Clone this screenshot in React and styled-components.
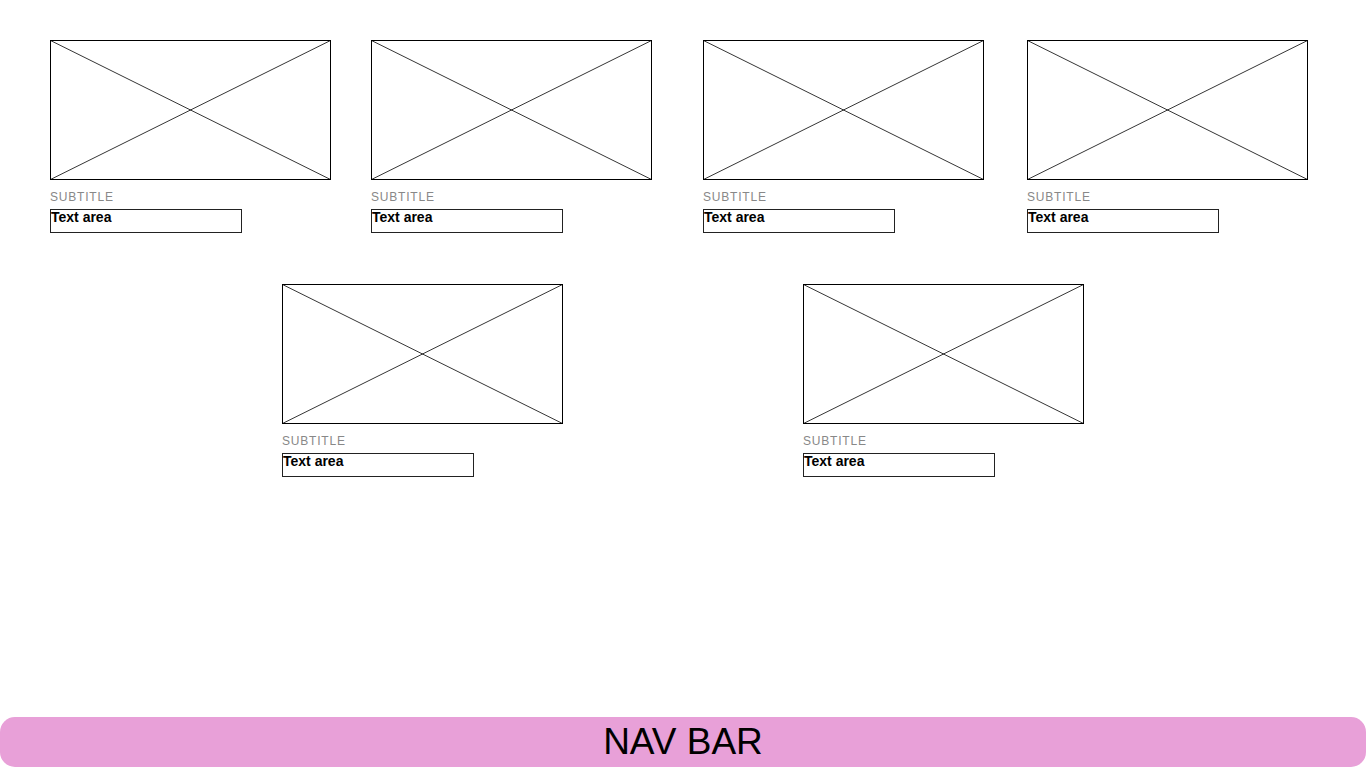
import React from 'react'
import styled, { createGlobalStyle } from 'styled-components'

const GlobalStyle = createGlobalStyle`
    body {
        margin: 0;
        font-family: "Liberation Sans", Arial, sans-serif;
        background: #fff;
    }
`

const Page = styled.div`
    height: 100vh;
    display: flex;
    flex-direction: column;
`

const Content = styled.div`
    flex: 1;
    display: flex;
    flex-direction: column;
    padding-top: 40px;
    gap: 51px;
`

const Row = styled.div`
    display: flex;
`

const Card = styled.div`
    display: flex;
    flex-direction: column;
    margin-left: ${props => props.offset}px;
`

const Placeholder = styled.svg`
    display: block;
    width: 281px;
    height: 140px;
`

const Subtitle = styled.div`
    margin-top: 9px;
    font-size: 12px;
    line-height: 16px;
    letter-spacing: 0.8px;
    color: #888;
`

const TextArea = styled.div`
    margin-top: 4px;
    width: 192px;
    height: 24px;
    box-sizing: border-box;
    border: 1px solid #222;
    padding: 0;
    font-size: 14px;
    font-weight: bold;
    line-height: 14px;
    color: #000;
`

const NavBar = styled.div`
    height: 50px;
    margin-bottom: 1px;
    background: #e8a0d8;
    border-radius: 15px;
    display: flex;
    align-items: center;
    justify-content: center;
    font-size: 37px;
    color: #000;
`

const Item = ({ offset }) => (
    <Card offset={offset}>
        <Placeholder viewBox="0 0 281 140">
            <rect x="0.5" y="0.5" width="280" height="139" fill="#fff" stroke="#000" />
            <line x1="0.5" y1="0.5" x2="280.5" y2="139.5" stroke="#000" strokeWidth="0.8" />
            <line x1="280.5" y1="0.5" x2="0.5" y2="139.5" stroke="#000" strokeWidth="0.8" />
        </Placeholder>
        <Subtitle>SUBTITLE</Subtitle>
        <TextArea>Text area</TextArea>
    </Card>
)

export default function App() {
    return (
        <Page>
            <GlobalStyle />
            <Content>
                <Row>
                    <Item offset={50} />
                    <Item offset={40} />
                    <Item offset={51} />
                    <Item offset={43} />
                </Row>
                <Row>
                    <Item offset={282} />
                    <Item offset={240} />
                </Row>
            </Content>
            <NavBar>NAV BAR</NavBar>
        </Page>
    )
}
